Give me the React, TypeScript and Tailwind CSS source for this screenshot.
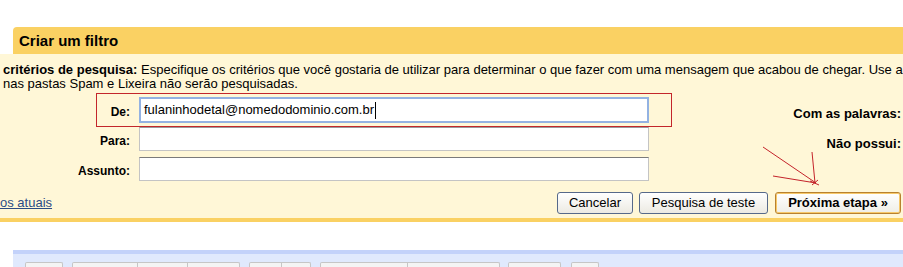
export default function App() {
  const btn =
    "flex h-[22px] items-center justify-center rounded-[3px] border border-[#56698a] bg-gradient-to-b from-white to-[#eceae2] text-[13px]";
  return (
    <div className="relative h-[267px] w-[903px] overflow-hidden bg-white font-['Liberation_Sans',Arial,sans-serif] text-black">
      <div className="h-[27px]" />
      <div className="flex h-[27px]">
        <div className="w-[13px] shrink-0" />
        <div className="flex-1 rounded-tl-[4px] bg-[#fad163] pl-[6px] text-[15px] font-bold leading-[27px] whitespace-nowrap">
          Criar um filtro
        </div>
      </div>
      <div className="h-[168px] border-b-4 border-[#fad163] bg-[#fff7d7] pt-[9px]">
        <div className="whitespace-nowrap pl-[3px] text-[13px] leading-[14px]">
          <div>
            <b>critérios de pesquisa:</b> Especifique os critérios que você gostaria de utilizar para determinar o que fazer com uma mensagem que acabou de chegar. Use a
          </div>
          <div>nas pastas Spam e Lixeira não serão pesquisadas.</div>
        </div>
        <div className="mt-[2px] flex">
          <div className="flex w-[672px] shrink-0 flex-col">
            <div className="ml-[96px] flex h-[34px] w-[576px] items-start border border-[#c3262b] pt-[3px]">
              <div className="flex h-[26px] items-center">
                <div className="w-[33px] pt-[4px] text-right text-[12px] font-bold leading-[15px]">De:</div>
                <div className="ml-[9px] flex h-[26px] w-[510px] items-center border-2 border-[#93b2e2] bg-white pl-[3px] text-[13px] whitespace-nowrap">
                  fulaninhodetal@nomedodominio.com.br
                  <span className="ml-[1px] inline-block h-[17px] w-px bg-black" />
                </div>
              </div>
            </div>
            <div className="flex h-[24px] items-center">
              <div className="w-[130px] pt-[4px] text-right text-[12px] font-bold leading-[15px]">Para:</div>
              <div className="ml-[9px] h-[24px] w-[510px] border border-[#c4c4c4] border-t-[#9a9a9a] bg-white" />
            </div>
            <div className="mt-[6px] flex h-[24px] items-center">
              <div className="w-[130px] pt-[4px] text-right text-[12px] font-bold leading-[15px]">Assunto:</div>
              <div className="ml-[9px] h-[24px] w-[510px] border border-[#c4c4c4] border-t-[#7a7a7a] bg-white" />
            </div>
          </div>
          <div className="flex flex-1 flex-col items-end pr-[2px] text-[13px] font-bold leading-[15px] whitespace-nowrap">
            <div className="mt-[13px]">Com as palavras:</div>
            <div className="mt-[15px]">Não possui:</div>
          </div>
        </div>
        <div className="mt-[11px] flex h-[22px] items-center pr-[2px]">
          <a className="text-[13px] text-[#2b4c86] underline">os atuais</a>
          <div className="ml-auto flex">
            <div className={`${btn} w-[76px]`}>Cancelar</div>
            <div className={`${btn} ml-[6px] w-[129px]`}>Pesquisa de teste</div>
            <div className="ml-[7px] flex h-[22px] w-[126px] items-center justify-center rounded-[3px] border border-[#b8812f] bg-gradient-to-b from-white to-[#efeee6] text-[13px] font-bold shadow-[inset_0_0_0_1px_#f7c96a]">
              Próxima etapa »
            </div>
          </div>
        </div>
      </div>
      <div className="h-[28px]" />
      <div className="ml-[13px] h-[17px] border-t-4 border-[#c3d2fa] bg-[#e0e9fd] pt-[8px]">
        <div className="flex pl-[12px]">
          <div className="h-[10px] w-[38px] rounded-t-[2px] border border-b-0 border-[#c6c6c6] bg-[#f4f4f4]" />
          <div className="ml-[9px] flex h-[10px] rounded-t-[2px] border border-b-0 border-[#c6c6c6] bg-[#f4f4f4]">
            <div className="w-[64px]" />
            <div className="w-[50px] border-l border-[#c6c6c6]" />
            <div className="w-[52px] border-l border-[#c6c6c6]" />
          </div>
          <div className="ml-[9px] flex h-[10px] rounded-t-[2px] border border-b-0 border-[#c6c6c6] bg-[#f4f4f4]">
            <div className="w-[31px]" />
            <div className="w-[29px] border-l border-[#c6c6c6]" />
          </div>
          <div className="ml-[9px] flex h-[10px] rounded-t-[2px] border border-b-0 border-[#c6c6c6] bg-[#f4f4f4]">
            <div className="w-[86px]" />
            <div className="w-[92px] border-l border-[#c6c6c6]" />
          </div>
          <div className="ml-[8px] h-[10px] w-[53px] rounded-t-[2px] border border-b-0 border-[#c6c6c6] bg-[#f4f4f4]" />
          <div className="ml-[10px] h-[10px] w-[28px] rounded-t-[2px] border border-b-0 border-[#c6c6c6] bg-[#f4f4f4]" />
        </div>
      </div>
      <svg className="pointer-events-none absolute left-0 top-0" width="903" height="267">
        <g stroke="#c4232a" strokeWidth="1" fill="none">
          <path d="M763 147 L816 183" />
          <path d="M812 152 L815 183" />
          <path d="M773 176 L816 183" />
          <path d="M810 181 L819 185" />
          <path d="M812 185 L818 180" />
        </g>
      </svg>
    </div>
  );
}
